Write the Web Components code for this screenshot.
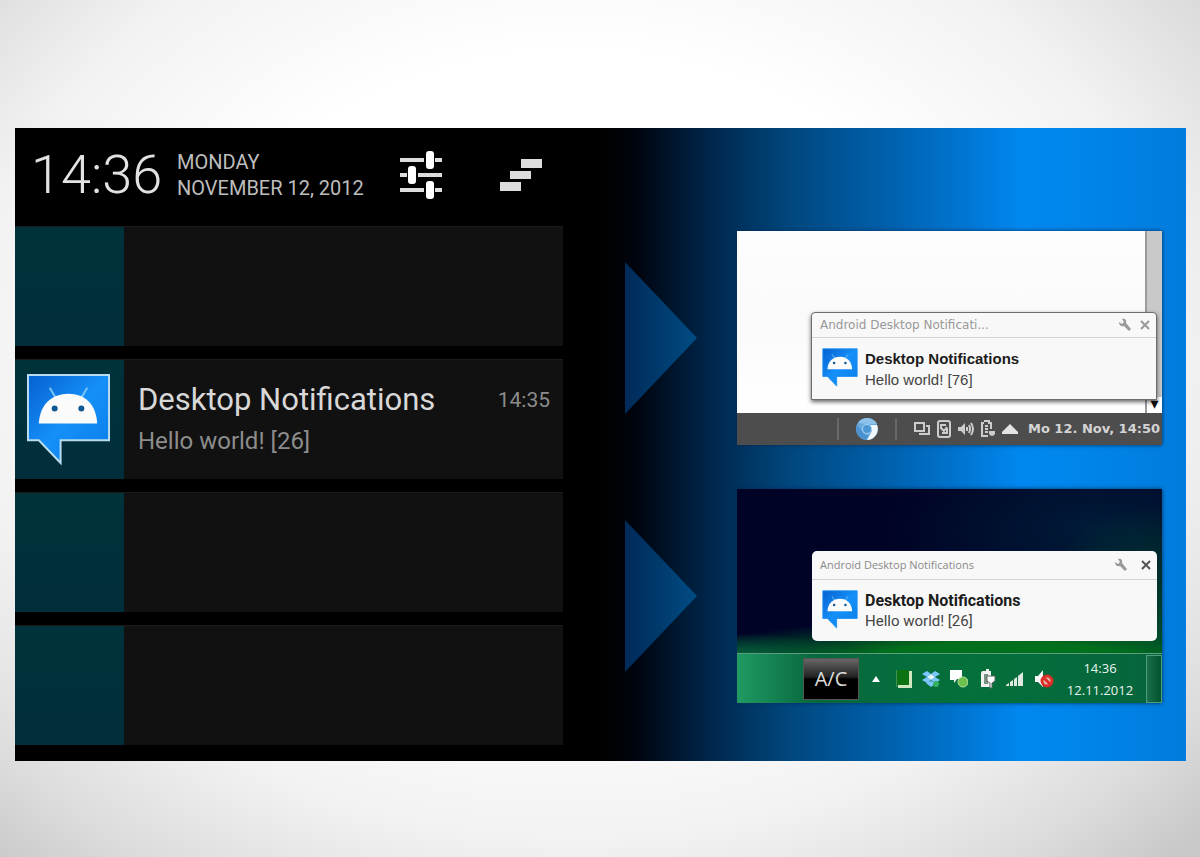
<!DOCTYPE html>
<html lang="en">
<head>
<meta charset="utf-8">
<meta name="viewport" content="width=device-width">
<title>Desktop Notifications</title>
<style>
  html, body { margin: 0; min-height: 100%; }
  body {
    min-height: 100vh;
    background: radial-gradient(ellipse 72% 80% at 48% 42%, #fff 45%, #f2f2f2 70%, #dcdcdc 88%, #c8c8c8 100%);
    font-family: Roboto, "Noto Sans", sans-serif;
  }
</style>
</head>
<body>
<promo-stage>
  <phone-shade slot="phone">
    <shade-row></shade-row>
    <shade-row heading="Desktop Notifications" time="14:35">Hello world! [26]</shade-row>
    <shade-row></shade-row>
    <shade-row></shade-row>
  </phone-shade>
  <flow-arrow slot="arrows"></flow-arrow>
  <flow-arrow slot="arrows"></flow-arrow>
  <linux-desktop slot="screens"></linux-desktop>
  <windows-desktop slot="screens"></windows-desktop>
</promo-stage>

<script>
const define = (name, html, setup) => customElements.define(name, class extends HTMLElement {
  constructor() {
    super();
    const t = document.createElement('template');
    t.innerHTML = '<style>*{box-sizing:border-box}:host{box-sizing:border-box}</style>' + html;
    this.attachShadow({ mode: 'open' }).appendChild(t.content.cloneNode(true));
  }
  connectedCallback() { if (setup) setup(this, this.shadowRoot); }
});

/* Tray, toolbar and window glyphs, keyed by name: [width, height, markup] */
const GLYPHS = {
  sliders: [44, 48, `<g stroke="#ddd" stroke-width="4"><path d="M1 9H25M36 9H43M1 24H8M19 24H43M1 39H25M36 39H43"/></g>
    <g fill="#fff"><rect x="27" y="0" width="8" height="18" rx="3"/><rect x="9" y="15" width="8" height="18" rx="3"/><rect x="27" y="30" width="8" height="18" rx="3"/></g>`],
  clear: [44, 32, `<g fill="#dcdcdc"><path d="M22 0H43V9H22zM11 12H32V20H11zM1 23H22V32H1z"/></g>`],
  wrench: [14, 14, `<path d="M1 4L4 6L6 4L4 1C7 0 9 2 8 5L13 11L11 13L6 8C3 9 1 7 1 4z" fill="#999"/>`],
  close: [10, 10, `<path d="M1 1L9 9M9 1L1 9" stroke="currentColor" stroke-width="2"/>`],
  chromium: [22, 24, `<circle cx="11" cy="12" r="11" fill="#69a9dc"/><path d="M2 6A11 11 0 0 1 21 7L12 7z" fill="#8cc2ea"/><path d="M21 8A11 11 0 0 1 11 23L16 14L14 8z" fill="#f0f8ff"/><path d="M1 8L6 14A6 6 0 0 0 13 18L10 23A11 11 0 0 1 1 8z" fill="#4a92d0"/><circle cx="11" cy="12" r="5" fill="#a9d3f2"/><circle cx="11" cy="12" r="4" fill="#4a97d4"/>`],
  screens: [16, 16, `<g fill="none" stroke="#ccc" stroke-width="2"><rect x="1" y="2" width="9" height="8"/><path d="M12 5H15V13H6V12"/></g>`],
  updater: [16, 18, `<rect x="2" y="1" width="12" height="16" rx="2" fill="none" stroke="#ccc" stroke-width="2"/><path d="M5 9V5H10M11 8V13H6M5 8L8 11L11 7" fill="none" stroke="#ccc" stroke-width="2"/>`],
  volume: [16, 14, `<path d="M0 5H3L7 1V13L3 9H0z" fill="#ccc"/><path d="M9 5V9M11 3Q13 7 11 11M13 1Q17 7 13 13" fill="none" stroke="#ccc" stroke-width="2"/>`],
  battery: [16, 18, `<path d="M4 1H9V3H11V9M8 16H2V3H4" fill="none" stroke="#ccc" stroke-width="2"/><path d="M5 6H8M5 9H8M5 12H8" stroke="#ccc" stroke-width="2"/><path d="M9 11H15V14Q12 18 9 14z" fill="#ccc"/>`],
  eject: [16, 10, `<path d="M8 0L16 8V10H0V8z" fill="#e4e4e4"/>`],
  expand: [8, 6, `<path d="M4 0L8 6H0z" fill="#fff"/>`],
  book: [16, 18, `<path d="M1 0H13V1H16V18H2V15H1z" fill="#cfe8c0"/><rect x="1" y="0" width="12" height="15" fill="#0b7312"/><path d="M0 0V17" stroke="#7fb57b"/>`],
  dropbox: [18, 18, `<g fill="#7cc6ff"><path d="M5 1L9 4L5 7L0 4zM13 1L18 4L13 7L9 4zM5 7L9 10L5 13L0 10zM13 7L18 10L13 13L9 10zM4 13L9 11L14 13L9 17z"/></g><path d="M9 4L13 7L9 10L5 7z" fill="#e3f5ff"/><circle cx="14" cy="14" r="3" fill="#35b05f"/>`],
  agent: [18, 18, `<path d="M0 0H12V9H7L4 13V10H0z" fill="#fff"/><circle cx="13" cy="12" r="5" fill="#6dc04b" stroke="#b5dfa0"/>`],
  power: [18, 20, `<path d="M4 2H8V0H11V2H13V18H3V4z" fill="#f2f2f2"/><path d="M6 5H10V15H6z" fill="#7d9183"/><path d="M9 7H17V12L14 14V19H12V14L9 12z" fill="#fff" stroke="#56685c"/>`],
  signal: [18, 16, `<path d="M0 14L3 12V15H0zM4 11L7 9V15H4zM8 8L11 6V15H8zM12 5L17 1V15H12z" fill="#dfe9e2"/>`],
  muted: [20, 18, `<path d="M1 6H4L9 0V17L4 12H1z" fill="#f6f6f6"/><circle cx="13" cy="11" r="5" fill="#e9b9ae" stroke="#dd2d28" stroke-width="3"/><path d="M9 7L17 15" stroke="#dd2d28" stroke-width="3"/>`]
};
define('glyph-icon', `<style>:host{display:inline-flex;flex:none}svg{display:block}</style><span></span>`, (el, root) => {
  const [w, h, body] = GLYPHS[el.getAttribute('name')];
  root.querySelector('span').innerHTML = `<svg width="${w}" height="${h}" viewBox="0 0 ${w} ${h}" fill="none" aria-hidden="true">${body}</svg>`;
});

define('bubble-icon', `
<style>
  :host { display: block; flex: none; width: 36px; }
  svg { display: block; width: 100%; }
  .edge { stroke: var(--bubble-edge, #1590f5); }
</style>
<svg viewBox="-1 -1 86 95" aria-hidden="true">
  <defs><linearGradient id="g" x1="0" y1="0" x2="1" y2="1"><stop offset="0" stop-color="#0560d0"/><stop offset=".5" stop-color="#1590f8"/><stop offset="1" stop-color="#0a7ce8"/></linearGradient></defs>
  <path class="edge" d="M1 1H83V67H34V90L12 67H1z" fill="url(#g)" stroke-width="2"/>
  <path d="M23 14L29 24M61 14L55 24" stroke="#7cc6f7" stroke-width="2"/>
  <path d="M12 50C13 31 25 20 42 20S70 31 71 50z" fill="#fbfbfb"/>
  <circle cx="28" cy="35" r="3" fill="#0d5793"/><circle cx="55" cy="35" r="3" fill="#0d5793"/>
</svg>`);

define('promo-stage', `
<style>
  :host { display: block; padding: 128px 14px 96px 15px; }
  main { display: flex; align-items: stretch;
    background: linear-gradient(90deg, #000 50%, #00040e 53%, #00142a 56%, #002448 59%, #003460 62%, #00467c 66%, #005ca4 73%, #0072cc 80%, #0088f0 86%, #0084e8 92%, #007cdc 100%); }
  .phone { flex: 1; min-width: 0; }
  .arrows, .screens { display: flex; flex-direction: column; }
  .arrows { width: 72px; margin: 134px 40px 0 62px; gap: 106px; }
  .screens { width: 425px; margin: 103px 24px 0 0; gap: 44px; }
</style>
<main>
  <div class="phone"><slot name="phone"></slot></div>
  <div class="arrows"><slot name="arrows"></slot></div>
  <div class="screens"><slot name="screens"></slot></div>
</main>`);

define('flow-arrow', `
<style>:host{display:block}svg{display:block}</style>
<svg width="72" height="152" viewBox="0 0 72 152" aria-hidden="true">
  <defs><linearGradient id="a"><stop offset="0" stop-color="#002a58"/><stop offset="1" stop-color="#004c84"/></linearGradient></defs>
  <path d="M0 0L72 76L0 152z" fill="url(#a)"/>
</svg>`);

define('phone-shade', `
<style>
  :host { display: block; background: #000; padding-bottom: 16px; }
  header { display: flex; align-items: center; height: 98px; padding: 0 20px 4px 16px; color: #e2e2e2; }
  .clock { flex: none; width: 146px; font-size: 54px; line-height: 64px; font-weight: 300; }
  .date { font-size: 20px; line-height: 26px; color: #bdbdbd; white-space: nowrap; margin-right: auto; }
  button { display: flex; flex: none; border: 0; padding: 0; background: none; margin-left: 56px; }
  .date + button { margin-left: 0; }
  .rows { display: grid; gap: 13px; }
</style>
<header>
  <time class="clock">14:36</time>
  <div class="date">MONDAY<br>NOVEMBER 12, 2012</div>
  <button aria-label="Quick settings"><glyph-icon name="sliders"></glyph-icon></button>
  <button aria-label="Clear all"><glyph-icon name="clear"></glyph-icon></button>
</header>
<div class="rows"><slot></slot></div>`);

define('shade-row', `
<style>
  :host { display: flex; height: 120px; background: #111; border-top: 1px solid #1b1b1b; color: #8c8c8c; }
  .tile { flex: none; width: 109px; padding: 13px 11px; background: linear-gradient(#00323a, #002e3b); --bubble-edge: #b9dcf0; }
  .tile bubble-icon { width: 85px; }
  .body { flex: 1; min-width: 0; padding: 19px 13px 0 14px; }
  .top { display: flex; justify-content: space-between; align-items: center; }
  h2 { margin: 0; font-size: 31px; line-height: 42px; font-weight: 400; color: #d8d8d8; white-space: nowrap; }
  time { font-size: 21px; }
  p { margin: 0; font-size: 24px; line-height: 40px; }
</style>
<div class="tile"></div><div class="body"></div>`, (el, root) => {
  const title = el.getAttribute('heading');
  if (!title) return;
  root.querySelector('.tile').innerHTML = '<bubble-icon></bubble-icon>';
  root.querySelector('.body').innerHTML = `<div class="top"><h2>${title}</h2><time>${el.getAttribute('time')}</time></div><p><slot></slot></p>`;
});

define('desktop-toast', `
<style>
  :host { display: block; color: #222; font-family: "Liberation Sans", Arial, sans-serif; background: #f8f8f8; }
  header { display: flex; align-items: center; gap: var(--bar-gap, 8px); height: var(--bar, 25px); padding: 0 6px 0 8px; border-bottom: 1px solid #d4d4d4; color: var(--bar-ink, #999); }
  .app { flex: 1; font-size: var(--bar-size, 12px); line-height: 16px; font-family: var(--bar-font, "DejaVu Sans"), sans-serif; }
  button { display: flex; border: 0; padding: 0; background: none; color: var(--x-ink, #999); }
  .content { display: flex; gap: 7px; padding: 10px; }
  h3, p { margin: 0; line-height: 21px; white-space: nowrap; font-family: var(--text-font, inherit); }
  h3 { font-size: var(--title, 15px); color: #1c1c1c; }
  p { font-size: 15px; color: #444; }
</style>
<header><span class="app"></span>
  <button aria-label="Options"><glyph-icon name="wrench"></glyph-icon></button>
  <button aria-label="Close"><glyph-icon name="close"></glyph-icon></button>
</header>
<div class="content"><bubble-icon></bubble-icon><div><h3>Desktop Notifications</h3><p><slot></slot></p></div></div>`,
  (el, root) => { root.querySelector('.app').textContent = el.getAttribute('app'); });

define('linux-desktop', `
<style>
  :host { display: block; box-shadow: 0 0 4px #002c58; }
  .area { position: relative; display: flex; justify-content: flex-end; height: 182px; background: linear-gradient(#fdfdfd, #fafafa 50%, #fff); }
  .scroll { display: flex; flex-direction: column; justify-content: flex-end; width: 17px; background: #c9c9c9; border-left: 2px solid #9b9b9b; }
  .scroll span { height: 16px; background: #fff; color: #111; font: 16px/14px "DejaVu Sans", sans-serif; text-align: center; }
  desktop-toast { position: absolute; right: 5px; bottom: 13px; width: 346px; height: 88px; border: 1px solid #6d6d6d; border-radius: 4px 4px 0 0; box-shadow: 0 2px 4px #0009; }
  footer { display: flex; align-items: center; justify-content: flex-end; height: 32px; padding-right: 2px; background: #4d4d4d; color: #d4d4d4; }
  i { width: 2px; height: 22px; background: #686868; }
  .launch { display: flex; padding: 0 17px; }
  .tray { display: flex; align-items: center; gap: 6px; margin: 0 10px 0 17px; }
  time { font: bold 13px/20px "DejaVu Sans", sans-serif; white-space: nowrap; }
</style>
<div class="area">
  <div class="scroll"><span>▾</span></div>
  <desktop-toast app="Android Desktop Notificati...">Hello world! [76]</desktop-toast>
</div>
<footer>
  <i></i><span class="launch"><glyph-icon name="chromium"></glyph-icon></span><i></i>
  <span class="tray"><glyph-icon name="screens"></glyph-icon><glyph-icon name="updater"></glyph-icon><glyph-icon name="volume"></glyph-icon><glyph-icon name="battery"></glyph-icon><glyph-icon name="eject"></glyph-icon></span>
  <time>Mo 12. Nov, 14:50</time>
</footer>`);

define('windows-desktop', `
<style>
  :host { display: block; box-shadow: 0 0 4px #002c58; background: #000326; }
  .area { position: relative; height: 164px;
    background: radial-gradient(ellipse 75% 26% at 62% 104%, #00701c 40%, #005a2a99 70%, #0000), radial-gradient(ellipse 30% 16% at 0 104%, #0a7a48, #0000), radial-gradient(ellipse 30% 70% at 100% 80%, #00442c, #0000), radial-gradient(ellipse 50% 60% at 85% 25%, #001c38, #000326); }
  desktop-toast { position: absolute; right: 5px; bottom: 12px; width: 345px; height: 90px; border-radius: 5px;
    --bar: 29px; --bar-gap: 13px; --bar-size: 11px; --bar-font: "Open Sans"; --bar-ink: #8a8a8a; --x-ink: #555; --text-font: Roboto; --title: 16px; }
  footer { display: flex; align-items: center; justify-content: flex-end; height: 50px; border-top: 1px solid #5d9e80;
    background: linear-gradient(90deg, #1f9a62, #08683f 18%, #04703a 55%, #06643d); color: #e9f5ee; }
  .lang { width: 56px; height: 42px; margin-right: 13px; border: 1px solid #555; padding: 0; color: #ddd; font: 20px/40px "Open Sans", sans-serif; background: linear-gradient(#666, #222 45%, #000 50%, #000); }
  .tray { display: flex; align-items: center; gap: 10px; }
  .tray glyph-icon:first-child { margin-right: 6px; }
  time { width: 92px; text-align: center; font: 13px/22px "Open Sans", sans-serif; }
  .peek { width: 16px; height: 48px; border: 1px solid #4f9d78; background: linear-gradient(90deg, #1a6e4b, #02522f); padding: 0; }
</style>
<div class="area"><desktop-toast app="Android Desktop Notifications">Hello world! [26]</desktop-toast></div>
<footer>
  <button class="lang">A/C</button>
  <span class="tray"><glyph-icon name="expand"></glyph-icon><glyph-icon name="book"></glyph-icon><glyph-icon name="dropbox"></glyph-icon><glyph-icon name="agent"></glyph-icon><glyph-icon name="power"></glyph-icon><glyph-icon name="signal"></glyph-icon><glyph-icon name="muted"></glyph-icon></span>
  <time>14:36<br>12.11.2012</time>
  <button class="peek" aria-label="Show desktop"></button>
</footer>`);
</script>
</body>
</html>
